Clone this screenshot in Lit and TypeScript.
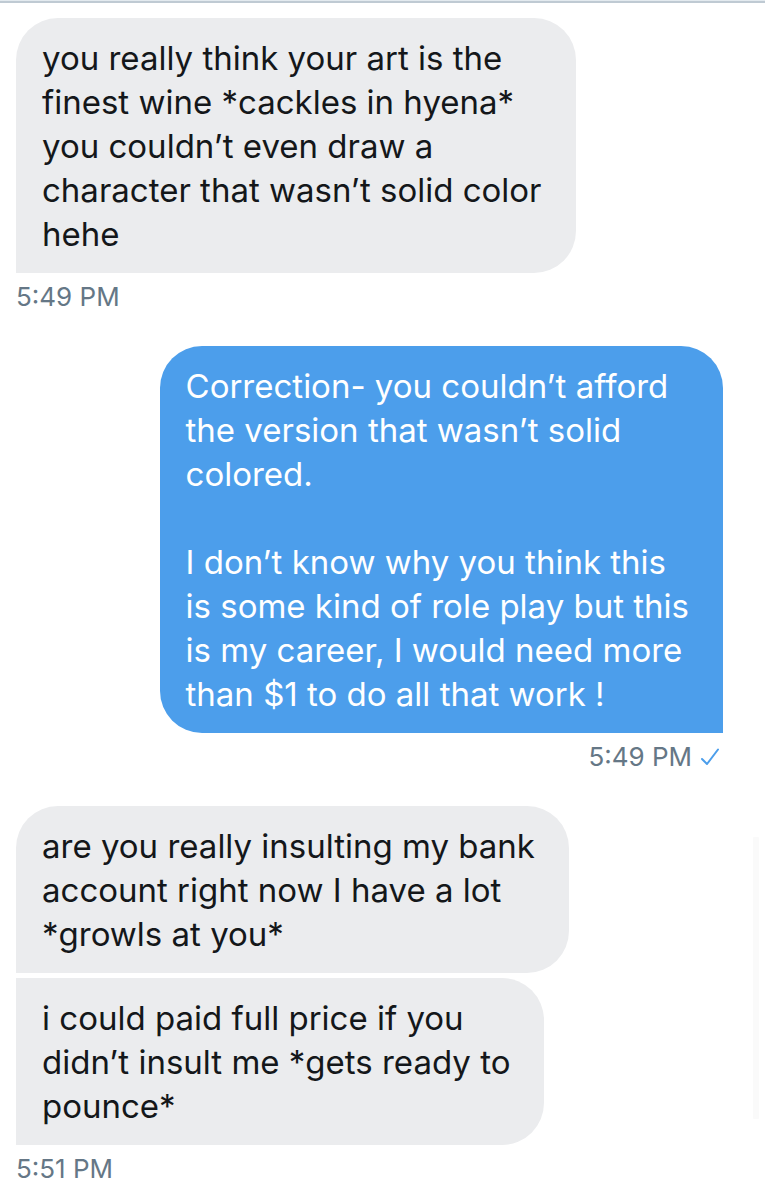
import { LitElement, html, css } from "lit";
import { customElement, property } from "lit/decorators.js";

@customElement("chat-bubble")
export class ChatBubble extends LitElement {
  @property({ type: Array }) lines: string[] = [];
  @property({ type: Boolean, reflect: true }) sent = false;
  @property({ type: Boolean, reflect: true }) joined = false;

  static styles = css`
    :host {
      display: block;
      box-sizing: border-box;
      width: fit-content;
      max-width: 100%;
      padding: 18px 34px 17px 26px;
      border-radius: 42px 42px 42px 0;
      background: #ebecee;
      color: #14171a;
    }
    :host([joined]) { border-top-left-radius: 0; }
    :host([sent]) {
      border-radius: 42px 42px 0 42px;
      background: #4c9eeb;
      color: #fff;
    }
    .text {
      margin: 0;
      font-size: 33px;
      line-height: 44px;
      white-space: pre-wrap;
    }
  `;

  render() {
    return html`<p class="text">${this.lines.join("\n")}</p>`;
  }
}

@customElement("app-root")
export class AppRoot extends LitElement {
  static styles = css`
    :host {
      display: block;
      box-sizing: border-box;
      min-height: 100vh;
      position: relative;
      background: #fff;
      font-family: Inter, "Liberation Sans", sans-serif;
    }
    .divider {
      height: 2px;
      border-top: 1px solid #e3eaef;
      background: #bfcad3;
    }
    .thread {
      display: flex;
      flex-direction: column;
      gap: 34px;
      padding: 15px 42px 16px 16px;
    }
    .group {
      display: flex;
      flex-direction: column;
      align-items: flex-start;
      gap: 5px;
    }
    .group.mine { align-items: flex-end; }
    .meta {
      display: flex;
      align-items: center;
      gap: 8px;
      padding-top: 4px;
      font-size: 26px;
      line-height: 30px;
      color: #657786;
    }
    .mine .meta { padding-right: 3px; }
    .check { display: block; width: 20px; height: 20px; }
    .scrollbar {
      position: absolute;
      top: 837px;
      right: 6px;
      width: 6px;
      height: 282px;
      border-radius: 1px;
      background: #fafafa;
    }
  `;

  render() {
    return html`
      <div class="divider"></div>
      <main class="thread">
        <section class="group">
          <chat-bubble .lines=${[
            "you really think your art is the",
            "finest wine *cackles in hyena*",
            "you couldn’t even draw a",
            "character that wasn’t solid color",
            "hehe",
          ]}></chat-bubble>
          <time class="meta">5:49 PM</time>
        </section>
        <section class="group mine">
          <chat-bubble sent .lines=${[
            "Correction- you couldn’t afford",
            "the version that wasn’t solid",
            "colored.",
            "",
            "I don’t know why you think this",
            "is some kind of role play but this",
            "is my career, I would need more",
            "than $1 to do all that work !",
          ]}></chat-bubble>
          <div class="meta">
            <time>5:49 PM</time>
            <svg class="check" viewBox="0 0 20 20" role="img" aria-label="Sent">
              <path d="M2 12 7 17 18 2.500" fill="none" stroke="#4c9eeb" stroke-width="2" stroke-linecap="round" stroke-linejoin="round"/>
            </svg>
          </div>
        </section>
        <section class="group">
          <chat-bubble .lines=${[
            "are you really insulting my bank",
            "account right now I have a lot",
            "*growls at you*",
          ]}></chat-bubble>
          <chat-bubble joined .lines=${[
            "i could paid full price if you",
            "didn’t insult me *gets ready to",
            "pounce*",
          ]}></chat-bubble>
          <time class="meta">5:51 PM</time>
        </section>
      </main>
      <div class="scrollbar"></div>
    `;
  }
}
